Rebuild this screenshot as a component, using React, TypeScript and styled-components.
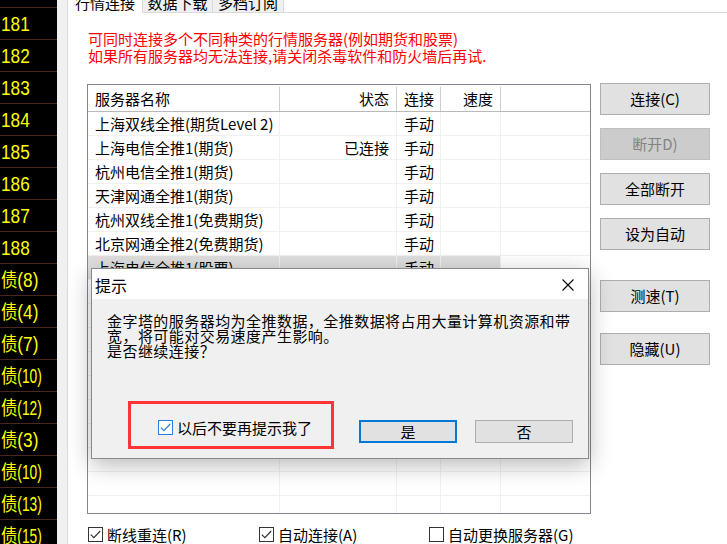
import React from "react";
import styled, { createGlobalStyle } from "styled-components";

const GlobalStyle = createGlobalStyle`
  html, body { margin: 0; padding: 0; background: #fff; }
  body { width: 727px; height: 544px; overflow: hidden; font-family: "Noto Sans CJK SC", "Liberation Sans", sans-serif; }
  * { box-sizing: border-box; }
`;

const CJK = `"Noto Sans CJK SC", "Liberation Sans", sans-serif`;

const Root = styled.div`
  position: relative;
  display: flex;
  width: 727px;
  height: 544px;
  overflow: hidden;
  background: #fff;
`;

/* ---------- left quote column ---------- */
const Quotes = styled.div`
  width: 57px;
  flex: none;
  background: #000;
  display: flex;
  flex-direction: column;
  overflow: hidden;
`;
const QuoteTop = styled.div`
  height: 7px;
  flex: none;
`;
const QuoteRow = styled.div`
  height: 32px;
  flex: none;
  border-top: 1px solid #4a261c;
  display: flex;
  align-items: center;
  padding-left: 1px;
  white-space: nowrap;
  color: #ffff00;
  font-family: "Liberation Sans Narrow", "Liberation Sans", sans-serif;
  font-size: 20px;
  line-height: 1;
`;
const QuoteText = styled.span`
  display: inline-block;
  transform-origin: left center;
  transform: scaleX(0.86);
`;
const BondChar = styled.span`
  font-family: ${CJK};
  font-size: 19px;
`;
const BondNum = styled.span<{ $narrow?: boolean }>`
  display: inline-block;
  transform-origin: left center;
  transform: ${(p) => (p.$narrow ? "scaleX(0.8)" : "none")};
`;

const Gutter = styled.div`
  width: 10px;
  flex: none;
  background: #f0f0f0;
`;

/* ---------- tab control ---------- */
const TabArea = styled.div`
  flex: 1;
  min-width: 0;
  display: flex;
  flex-direction: column;
`;
const TabStrip = styled.div`
  display: flex;
  align-items: flex-start;
  height: 25px;
  margin-top: -12px;
  margin-bottom: -1px;
  flex: none;
  position: relative;
  z-index: 1;
`;
const Tab = styled.div<{ $active?: boolean; $w: number }>`
  width: ${(p) => p.$w}px;
  height: ${(p) => (p.$active ? 25 : 24)}px;
  border: 1px solid #d9d9d9;
  border-bottom: none;
  border-left: ${(p) => (p.$active ? "1px solid #d9d9d9" : "none")};
  background: ${(p) => (p.$active ? "#fff" : "#f0f0f0")};
  font-family: ${CJK};
  font-size: 15px;
  line-height: 23px;
  padding-top: 2px;
  text-align: center;
  color: #000;
`;
const Panel = styled.div`
  flex: 1;
  border-left: 1px solid #d9d9d9;
  border-top: 1px solid #d9d9d9;
  padding: 17px 0 0 19px;
  display: flex;
  flex-direction: column;
`;
const Notice = styled.div`
  color: #ff0000;
  font-family: ${CJK};
  font-size: 15px;
  line-height: 17px;
  margin-left: 1px;
  white-space: nowrap;
`;
const MainRow = styled.div`
  display: flex;
  align-items: flex-start;
  gap: 9px;
  margin-top: 20px;
`;
const ListColumn = styled.div`
  display: flex;
  flex-direction: column;
`;

/* ---------- list view ---------- */
const List = styled.div`
  width: 504px;
  height: 430px;
  border: 1px solid #828790;
  background: #fff;
  overflow: hidden;
  display: flex;
  flex-direction: column;
`;
const COLS = "192px 117px 44px 60px 1fr";
const HeaderRow = styled.div`
  display: grid;
  grid-template-columns: ${COLS};
  height: 27px;
  flex: none;
  border-bottom: 1px solid #b9b9b9;
`;
const HeaderCell = styled.div<{ $align?: "left" | "right"; $last?: boolean }>`
  margin-top: 2px;
  border-right: ${(p) => (p.$last ? "none" : "1px solid #cfcfcf")};
  font-family: ${CJK};
  font-size: 15px;
  line-height: 24px;
  color: #000;
  text-align: ${(p) => p.$align ?? "left"};
  padding: ${(p) => (p.$align === "right" ? "0 7px 0 0" : "0 0 0 7px")};
  white-space: nowrap;
`;
const Row = styled.div`
  display: grid;
  grid-template-columns: ${COLS};
  height: 24px;
  flex: none;
`;
const Cell = styled.div<{ $align?: "left" | "right"; $sel?: boolean; $last?: boolean }>`
  border-right: ${(p) => (p.$last ? "none" : "1px solid #f0f0f0")};
  border-bottom: 1px solid #f0f0f0;
  background: ${(p) => (p.$sel ? "#dedede" : "transparent")};
  font-family: ${CJK};
  font-size: 15px;
  line-height: 23px;
  color: #000;
  text-align: ${(p) => p.$align ?? "left"};
  padding: ${(p) => (p.$align === "right" ? "0 7px 0 0" : "0 0 0 7px")};
  white-space: nowrap;
  overflow: hidden;
`;

/* ---------- side buttons ---------- */
const SideButtons = styled.div`
  display: flex;
  flex-direction: column;
  width: 110px;
  margin-top: -1px;
`;
const SideButton = styled.button<{ $gap: number; $off?: boolean }>`
  margin-top: ${(p) => p.$gap}px;
  width: 110px;
  height: 32px;
  padding: 0;
  border: 1px solid ${(p) => (p.$off ? "#bfbfbf" : "#adadad")};
  background: ${(p) => (p.$off ? "#cccccc" : "#e1e1e1")};
  color: ${(p) => (p.$off ? "#838383" : "#000")};
  font-family: ${CJK};
  font-size: 15px;
  line-height: 30px;
`;

/* ---------- check boxes ---------- */
const Options = styled.div`
  display: grid;
  grid-template-columns: 171px 170px auto;
  margin-top: 13px;
  padding-left: 1px;
`;
const CheckLabel = styled.label`
  display: flex;
  align-items: center;
  gap: 4px;
  height: 15px;
  font-family: ${CJK};
  font-size: 15px;
  line-height: 15px;
  color: #000;
  white-space: nowrap;
`;
const Box = styled.span<{ $color: string }>`
  width: 15px;
  height: 15px;
  flex: none;
  border: 1px solid ${(p) => p.$color};
  background: #fff;
  display: flex;
  align-items: center;
  justify-content: center;
`;

const Check: React.FC<{ checked?: boolean; color?: string; label: string }> = ({
  checked,
  color = "#333",
  label,
}) => (
  <CheckLabel>
    <Box $color={color}>
      {checked && (
        <svg width="11" height="9" viewBox="0 0 11 9">
          <polyline points="0.8,4.6 3.9,7.6 10.2,1" fill="none" stroke={color} strokeWidth="1.2" />
        </svg>
      )}
    </Box>
    {label}
  </CheckLabel>
);

/* ---------- dialog ---------- */
const Dialog = styled.div`
  position: absolute;
  left: 91px;
  top: 268px;
  width: 498px;
  height: 191px;
  z-index: 5;
  border: 1px solid #8a8a8a;
  background: #f0f0f0;
  box-shadow: 0 6px 22px rgba(0, 0, 0, 0.28);
  display: flex;
  flex-direction: column;
`;
const TitleBar = styled.div`
  height: 30px;
  flex: none;
  background: #fff;
  display: flex;
  align-items: center;
  justify-content: space-between;
  padding: 2px 14px 0 3px;
`;
const Title = styled.div`
  font-family: ${CJK};
  font-size: 16px;
  line-height: 20px;
  color: #000;
`;
const DialogBody = styled.div`
  flex: 1;
  display: flex;
  flex-direction: column;
  padding: 14px 15px 15px 15px;
`;
const Message = styled.div`
  font-family: ${CJK};
  font-size: 15px;
  line-height: 15px;
  letter-spacing: 0.45px;
  color: #000;
  white-space: nowrap;
`;
const Footer = styled.div`
  margin-top: auto;
  display: flex;
  align-items: flex-start;
  padding-left: 51px;
`;
const DlgButton = styled.button<{ $focus?: boolean }>`
  width: 98px;
  height: 23px;
  padding: 0;
  margin-left: ${(p) => (p.$focus ? "auto" : "18px")};
  border: ${(p) => (p.$focus ? "2px solid #0078d7" : "1px solid #adadad")};
  background: #e1e1e1;
  font-family: ${CJK};
  font-size: 15px;
  line-height: 19px;
  color: #000;
`;
const Annotation = styled.div`
  position: absolute;
  left: 36px;
  top: 132px;
  width: 206px;
  height: 48px;
  border: 3px solid #ff3535;
  pointer-events: none;
`;

const quoteNumbers = ["181", "182", "183", "184", "185", "186", "187", "188"];
const bonds = [8, 4, 7, 10, 12, 3, 10, 13, 15];

const servers: { name: string; status: string; mode: string; sel?: boolean }[] = [
  { name: "上海双线全推(期货Level 2)", status: "", mode: "手动" },
  { name: "上海电信全推1(期货)", status: "已连接", mode: "手动" },
  { name: "杭州电信全推1(期货)", status: "", mode: "手动" },
  { name: "天津网通全推1(期货)", status: "", mode: "手动" },
  { name: "杭州双线全推1(免费期货)", status: "", mode: "手动" },
  { name: "北京网通全推2(免费期货)", status: "", mode: "手动" },
  { name: "上海电信全推1(股票)", status: "", mode: "手动", sel: true },
];
const emptyRows = Array.from({ length: 10 });

const buttons = [
  { label: "连接(C)", gap: 0 },
  { label: "断开D)", gap: 13, off: true },
  { label: "全部断开", gap: 13 },
  { label: "设为自动", gap: 13 },
  { label: "测速(T)", gap: 30 },
  { label: "隐藏(U)", gap: 21 },
];

export default function App() {
  return (
    <>
      <GlobalStyle />
      <Root>
        <Quotes>
          <QuoteTop />
          {quoteNumbers.map((q) => (
            <QuoteRow key={q}>
              <QuoteText>{q}</QuoteText>
            </QuoteRow>
          ))}
          {bonds.map((b, i) => (
            <QuoteRow key={"b" + i}>
              <QuoteText>
                <BondChar>债</BondChar>
                <BondNum $narrow={b >= 10}>({b})</BondNum>
              </QuoteText>
            </QuoteRow>
          ))}
        </Quotes>
        <Gutter />
        <TabArea>
          <TabStrip>
            <Tab $active $w={76}>行情连接</Tab>
            <Tab $w={70}>数据下载</Tab>
            <Tab $w={71}>多档订阅</Tab>
          </TabStrip>
          <Panel>
            <Notice>
              可同时连接多个不同种类的行情服务器(例如期货和股票)
              <br />
              如果所有服务器均无法连接,请关闭杀毒软件和防火墙后再试.
            </Notice>
            <MainRow>
              <ListColumn>
                <List>
                  <HeaderRow>
                    <HeaderCell>服务器名称</HeaderCell>
                    <HeaderCell $align="right">状态</HeaderCell>
                    <HeaderCell>连接</HeaderCell>
                    <HeaderCell $align="right">速度</HeaderCell>
                    <HeaderCell $last />
                  </HeaderRow>
                  {servers.map((s) => (
                    <Row key={s.name}>
                      <Cell $sel={s.sel}>{s.name}</Cell>
                      <Cell $sel={s.sel} $align="right">{s.status}</Cell>
                      <Cell $sel={s.sel}>{s.mode}</Cell>
                      <Cell $sel={s.sel} />
                      <Cell $last />
                    </Row>
                  ))}
                  {emptyRows.map((_, i) => (
                    <Row key={"e" + i}>
                      <Cell />
                      <Cell />
                      <Cell />
                      <Cell />
                      <Cell $last />
                    </Row>
                  ))}
                </List>
                <Options>
                  <Check checked label="断线重连(R)" />
                  <Check checked label="自动连接(A)" />
                  <Check label="自动更换服务器(G)" />
                </Options>
              </ListColumn>
              <SideButtons>
                {buttons.map((b) => (
                  <SideButton key={b.label} $gap={b.gap} $off={b.off}>
                    {b.label}
                  </SideButton>
                ))}
              </SideButtons>
            </MainRow>
          </Panel>
        </TabArea>

        <Dialog>
          <TitleBar>
            <Title>提示</Title>
            <svg width="12" height="12" viewBox="0 0 12 12">
              <path d="M0.5 0.5 L11.5 11.5 M11.5 0.5 L0.5 11.5" stroke="#000" strokeWidth="1.1" fill="none" />
            </svg>
          </TitleBar>
          <DialogBody>
            <Message>
              金字塔的服务器均为全推数据，全推数据将占用大量计算机资源和带
              <br />
              宽，将可能对交易速度产生影响。
              <br />
              是否继续连接？
            </Message>
            <Footer>
              <Check checked color="#2a7fd6" label="以后不要再提示我了" />
              <DlgButton $focus>是</DlgButton>
              <DlgButton>否</DlgButton>
            </Footer>
          </DialogBody>
          <Annotation />
        </Dialog>
      </Root>
    </>
  );
}
